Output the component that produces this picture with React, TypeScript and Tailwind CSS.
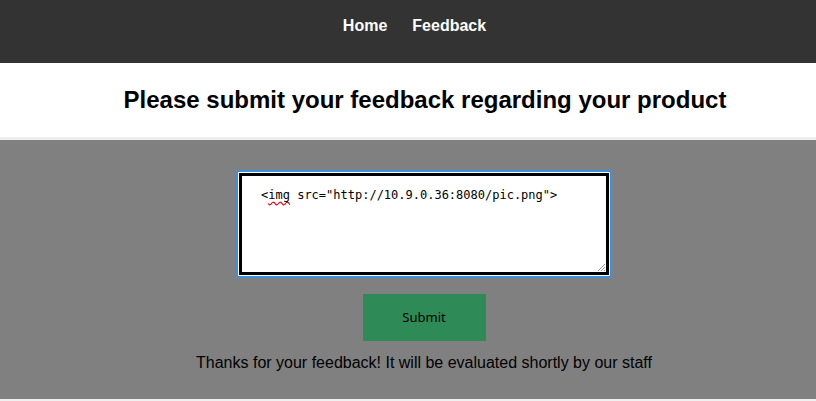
export default function App() {
  return (
    <div className="min-h-[401px] bg-[#f0f0f0] font-['Liberation_Sans',Arial,sans-serif]">
      <nav className="h-[63px] bg-[#333333] flex items-start justify-center pl-[13px] pt-[17px]">
        <a className="text-white font-bold text-[16px] leading-[18px] mr-[25px]">Home</a>
        <a className="text-white font-bold text-[16px] leading-[18px]">Feedback</a>
      </nav>
      <header className="h-[74px] bg-white flex items-center justify-center pl-[34px]">
        <h1 className="text-[24px] font-bold text-black leading-[28px]">
          Please submit your feedback regarding your product
        </h1>
      </header>
      <div className="h-[3px] bg-[#eeeeee]" />
      <main className="h-[259px] bg-[#808080] flex flex-col items-center pt-[30px] pl-[32px]">
        <div className="w-[376px] h-[108px] rounded-[3px] border-2 border-[#3d8fe0] bg-white p-px">
          <div className="relative w-full h-full border-[3px] border-black bg-white pl-[19px] pt-[12px] font-['DejaVu_Sans_Mono',monospace] text-[12px] leading-[15px] text-black">
            &lt;
            <span className="underline decoration-wavy decoration-red-600 underline-offset-2">img</span>{" "}
            src="http://10.9.0.36:8080/pic.png"&gt;
            <svg className="absolute right-0 bottom-0" width="10" height="10" viewBox="0 0 10 10">
              <path d="M9 2 L2 9 M9 5 L5 9 M9 8 L8 9" stroke="#999" strokeWidth="1" />
            </svg>
          </div>
        </div>
        <button className="mt-[16px] w-[123px] h-[47px] bg-[#2e8b57] text-[13px] text-black font-['Noto_Sans',sans-serif]">
          Submit
        </button>
        <p className="mt-[12px] text-[16px] leading-[20px] text-black">
          Thanks for your feedback! It will be evaluated shortly by our staff
        </p>
      </main>
    </div>
  );
}
